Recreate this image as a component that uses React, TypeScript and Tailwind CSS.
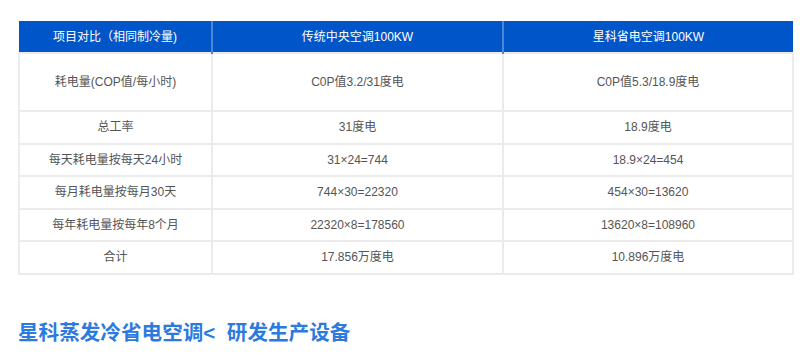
const rows = [
  { tall: true, name: '耗电量(COP值/每小时)', a: 'C0P值3.2/31度电', b: 'C0P值5.3/18.9度电' },
  { name: '总工率', a: '31度电', b: '18.9度电' },
  { name: '每天耗电量按每天24小时', a: '31×24=744', b: '18.9×24=454' },
  { name: '每月耗电量按每月30天', a: '744×30=22320', b: '454×30=13620' },
  { name: '每年耗电量按每年8个月', a: '22320×8=178560', b: '13620×8=108960' },
  { name: '合计', a: '17.856万度电', b: '10.896万度电' },
];

export default function App() {
  return (
    <div
      className="w-[800px] h-[357px] bg-white overflow-hidden pt-[21px] px-[18px]"
      style={{ fontFamily: '"Liberation Sans", Arial, "Noto Sans CJK SC", sans-serif' }}
    >
      <table className="w-[774px] border-collapse table-fixed text-[12px] text-[#555]">
        <colgroup>
          <col className="w-[193px]" />
          <col className="w-[291px]" />
          <col className="w-[290px]" />
        </colgroup>
        <thead>
          <tr className="h-[32px] bg-[#0055c8] text-white">
            <th className="font-normal border-r-2 border-[#4d86d6]">项目对比（相同制冷量)</th>
            <th className="font-normal border-r-2 border-[#4d86d6]">传统中央空调100KW</th>
            <th className="font-normal">星科省电空调100KW</th>
          </tr>
        </thead>
        <tbody>
          {rows.map((r) => (
            <tr key={r.name} className={r.tall ? 'h-[58px]' : 'h-[32.5px]'}>
              <td className="text-center border-2 border-[#ebebeb]">{r.name}</td>
              <td className="text-center border-2 border-[#ebebeb]">{r.a}</td>
              <td className="text-center border-2 border-[#ebebeb]">{r.b}</td>
            </tr>
          ))}
        </tbody>
      </table>
      <h2 className="mt-[46px] text-[20.6px] leading-[24px] font-bold text-[#2c7ae0] whitespace-pre">
        星科蒸发冷省电空调{'<  '}研发生产设备
      </h2>
    </div>
  );
}
